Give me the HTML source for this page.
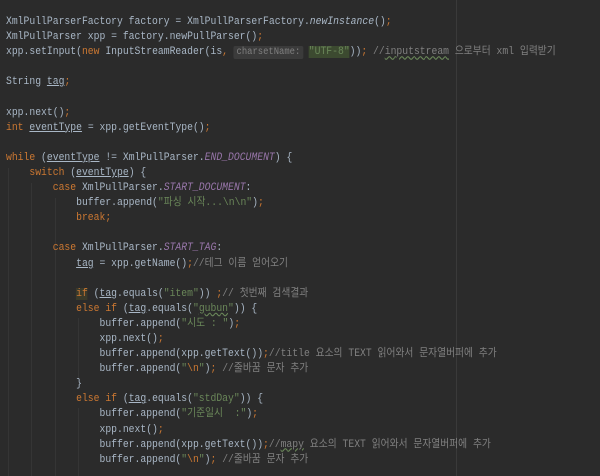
<!DOCTYPE html>
<html><head><meta charset="utf-8"><style>
html,body{margin:0;padding:0;}
body{width:600px;height:476px;background:#2b2b2b;overflow:hidden;position:relative;}
.c{position:absolute;left:6px;top:15px;font-family:"Liberation Mono","Noto Sans CJK KR",monospace;font-size:11px;line-height:15.1px;color:#a9b7c6;white-space:pre;transform:scaleX(0.885);transform-origin:0 0;}
.k{color:#cc7832}.s{color:#6a8759}.p{color:#9876aa;font-style:italic}.m{color:#808080}.i{font-style:italic}
.u{text-decoration:underline;text-decoration-color:#a9b7c6}
.w{text-decoration:underline wavy #6a8759;}
.h{background:#3b3b3b;color:#808080;font-size:10px;padding:1px 3px;border-radius:2px}
.g{background:#3c4a30}
.guide{position:absolute;width:1px;background:#353535}
.rm{position:absolute;left:456px;top:0;width:1px;height:476px;background:#3a3a3a}
</style></head><body>
<div class="rm"></div>
<div class="guide" style="left:8px;top:168px;height:308px"></div>
<div class="guide" style="left:31px;top:183px;height:293px"></div>
<div class="guide" style="left:55px;top:198px;height:278px"></div>
<div class="guide" style="left:78px;top:318px;height:60px"></div>
<div class="guide" style="left:78px;top:408px;height:68px"></div>
<div class="c">XmlPullParserFactory factory = XmlPullParserFactory.<span class="i">newInstance</span>()<span class="k">;</span>
XmlPullParser xpp = factory.newPullParser()<span class="k">;</span>
xpp.setInput(<span class="k">new</span> InputStreamReader(is<span class="k">,</span> <span class="h">charsetName:</span> <span class="s g">"UTF-8"</span>))<span class="k">;</span> <span class="m">//<span class="w">inputstream</span> 으로부터 xml 입력받기</span>

String <span class="u">tag</span><span class="k">;</span>

xpp.next()<span class="k">;</span>
<span class="k">int</span> <span class="u">eventType</span> = xpp.getEventType()<span class="k">;</span>

<span class="k">while</span> (<span class="u">eventType</span> != XmlPullParser.<span class="p">END_DOCUMENT</span>) {
    <span class="k">switch</span> (<span class="u">eventType</span>) {
        <span class="k">case</span> XmlPullParser.<span class="p">START_DOCUMENT</span>:
            buffer.append(<span class="s">"파싱 시작...\n\n"</span>)<span class="k">;</span>
            <span class="k">break;</span>

        <span class="k">case</span> XmlPullParser.<span class="p">START_TAG</span>:
            <span class="u">tag</span> = xpp.getName()<span class="k">;</span><span class="m">//테그 이름 얻어오기</span>

            <span class="k" style="background:#3b3a2a">if</span> (<span class="u">tag</span>.equals(<span class="s">"item"</span>)) <span class="k">;</span><span class="m">// 첫번째 검색결과</span>
            <span class="k">else if</span> (<span class="u">tag</span>.equals(<span class="s">"<span class="w">gubun</span>"</span>)) {
                buffer.append(<span class="s">"시도 : "</span>)<span class="k">;</span>
                xpp.next()<span class="k">;</span>
                buffer.append(xpp.getText())<span class="k">;</span><span class="m">//title 요소의 TEXT 읽어와서 문자열버퍼에 추가</span>
                buffer.append(<span class="s">"<span class="k">\n</span>"</span>)<span class="k">;</span> <span class="m">//줄바꿈 문자 추가</span>
            }
            <span class="k">else if</span> (<span class="u">tag</span>.equals(<span class="s">"stdDay"</span>)) {
                buffer.append(<span class="s">"기준일시  :"</span>)<span class="k">;</span>
                xpp.next()<span class="k">;</span>
                buffer.append(xpp.getText())<span class="k">;</span><span class="m">//<span class="w">mapy</span> 요소의 TEXT 읽어와서 문자열버퍼에 추가</span>
                buffer.append(<span class="s">"<span class="k">\n</span>"</span>)<span class="k">;</span> <span class="m">//줄바꿈 문자 추가</span></div>
</body></html>
